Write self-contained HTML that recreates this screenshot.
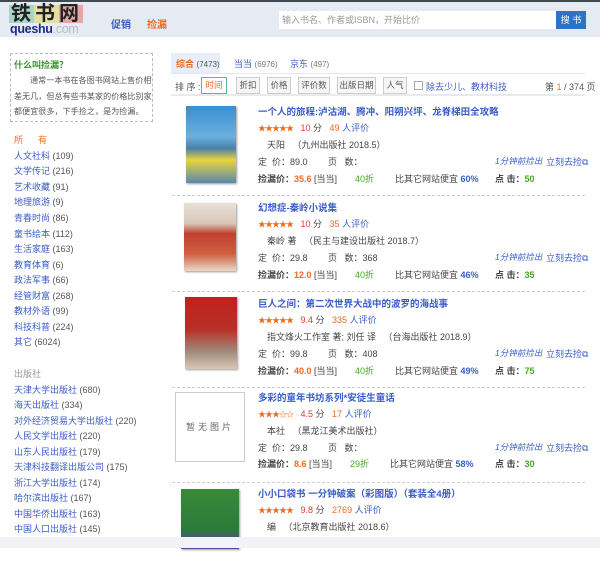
<!DOCTYPE html>
<html><head><meta charset="utf-8">
<style>
*{margin:0;padding:0;box-sizing:border-box}
body{width:600px;height:548px;overflow:hidden;background:#fff;font-family:"Liberation Sans","Noto Sans CJK SC",sans-serif;font-size:9px;color:#444;position:relative}
.a{position:absolute;white-space:nowrap}
.hdr{position:absolute;left:0;top:0;width:600px;height:37px;background:#e6ebf3;border-top:2px solid #3f4a50}
.blue{color:#3a5cc8}
.org{color:#f06a1e}
.red{color:#e8352a}
.grn{color:#46a52a}
.item{position:absolute;left:172px;width:413px;height:96px;border-bottom:1px dashed #ccc}
.item .t{left:86px;top:0;font-size:9.5px;font-weight:bold;color:#3a5cc8}
.stars{color:#f06a1e;font-size:8px;letter-spacing:-1px}
.cat{left:14px;font-size:9px}
.cat span{color:#555}
.btn{position:absolute;top:77px;height:17px;border:1px solid #ccc;background:#f6f6f6;font-size:8.5px;line-height:15px;text-align:center;color:#555;white-space:nowrap}
.m{font-style:italic;font-size:8.5px}
</style></head><body>
<div class="hdr"></div>
<div class="a" style="left:9px;top:5px;width:74px;height:18px;">
 <div class="a" style="left:0;top:0;width:25px;height:18px;background:#a8d5c8"></div>
 <div class="a" style="left:25px;top:0;width:25px;height:18px;background:#e3dfa0"></div>
 <div class="a" style="left:50px;top:0;width:24px;height:18px;background:#e6a6a6"></div>
 <div class="a" style="left:2px;top:-3px;font-size:20px;font-weight:bold;color:#222;letter-spacing:4px;line-height:24px">铁书网</div>
</div>
<div class="a" style="left:10px;top:22px;font-size:12.5px;font-weight:bold;color:#1d2a8a;letter-spacing:-0.3px">queshu<span style="color:#b7bcc6;font-weight:normal">.com</span></div>
<div class="a blue" style="left:111px;top:16px;font-size:10px;font-weight:bold">促销</div>
<div class="a org" style="left:147px;top:16px;font-size:10px;font-weight:bold">捡漏</div>
<div class="a" style="left:279px;top:11px;width:277px;height:18px;background:#fff;color:#999;font-size:9px;line-height:18px;padding-left:3px">输入书名、作者或ISBN，开始比价</div>
<div class="a" style="left:556px;top:11px;width:30px;height:18px;background:#2f73c7;color:#fff;font-size:9px;line-height:18px;text-align:center">搜 书</div>

<div class="a" style="left:10px;top:53px;width:143px;height:69px;border:1px dashed #bbb"></div>
<div class="a" style="left:14px;top:58px;font-weight:bold;color:#3a8f2a;font-size:9px">什么叫捡漏？</div>
<div class="a" style="left:14px;top:73px;line-height:15.5px;font-size:8px;color:#555;letter-spacing:0.1px">
<div style="padding-left:16px">通常一本书在各图书网站上售价相</div>
<div>差无几，但总有些书某家的价格比别家</div>
<div>都便宜很多，下手捡之，是为捡漏。</div>
</div>

<div class="a org" style="left:14px;top:133px">所&nbsp;&nbsp;&nbsp;&nbsp;&nbsp;&nbsp;有</div>
<div class="a cat blue" style="top:149px">人文社科 <span>(109)</span></div>
<div class="a cat blue" style="top:164px">文学传记 <span>(216)</span></div>
<div class="a cat blue" style="top:180px">艺术收藏 <span>(91)</span></div>
<div class="a cat blue" style="top:195px">地理旅游 <span>(9)</span></div>
<div class="a cat blue" style="top:211px">青春时尚 <span>(86)</span></div>
<div class="a cat blue" style="top:227px">童书绘本 <span>(112)</span></div>
<div class="a cat blue" style="top:242px">生活家庭 <span>(163)</span></div>
<div class="a cat blue" style="top:258px">教育体育 <span>(6)</span></div>
<div class="a cat blue" style="top:273px">政法军事 <span>(66)</span></div>
<div class="a cat blue" style="top:289px">经管财富 <span>(268)</span></div>
<div class="a cat blue" style="top:304px">教材外语 <span>(99)</span></div>
<div class="a cat blue" style="top:320px">科技科普 <span>(224)</span></div>
<div class="a cat blue" style="top:335px">其它 <span>(6024)</span></div>
<div class="a cat" style="top:367px;color:#999">出版社</div>
<div class="a cat blue" style="top:383px">天津大学出版社 <span>(680)</span></div>
<div class="a cat blue" style="top:398px">海天出版社 <span>(334)</span></div>
<div class="a cat blue" style="top:414px">对外经济贸易大学出版社 <span>(220)</span></div>
<div class="a cat blue" style="top:429px">人民文学出版社 <span>(220)</span></div>
<div class="a cat blue" style="top:445px">山东人民出版社 <span>(179)</span></div>
<div class="a cat blue" style="top:460px">天津科技翻译出版公司 <span>(175)</span></div>
<div class="a cat blue" style="top:476px">浙江大学出版社 <span>(174)</span></div>
<div class="a cat blue" style="top:491px">哈尔滨出版社 <span>(167)</span></div>
<div class="a cat blue" style="top:507px">中国华侨出版社 <span>(163)</span></div>
<div class="a cat blue" style="top:522px">中国人口出版社 <span>(145)</span></div>

<div class="a" style="left:171px;top:53px;width:49px;height:20px;background:#e7eef8"></div>
<div class="a" style="left:171px;top:73px;width:414px;height:1px;background:#e3e8f0"></div>
<div class="a" style="left:176px;top:57px"><b class="org">综合</b> <span style="color:#555;font-size:8px">(7473)</span></div>
<div class="a" style="left:234px;top:57px"><span class="blue">当当</span> <span style="color:#777;font-size:8px">(6976)</span></div>
<div class="a" style="left:290px;top:57px"><span class="blue">京东</span> <span style="color:#777;font-size:8px">(497)</span></div>
<div class="a" style="left:175px;top:80px;color:#555">排 序 :</div>
<div class="btn" style="left:201px;width:26px;border-color:#5bb89a;background:#fff;color:#f06a1e">时间</div>
<div class="btn" style="left:236px;width:24px">折扣</div>
<div class="btn" style="left:267px;width:24px">价格</div>
<div class="btn" style="left:298px;width:32px">评价数</div>
<div class="btn" style="left:337px;width:39px">出版日期</div>
<div class="btn" style="left:383px;width:24px">人气</div>
<div class="a" style="left:414px;top:81px;width:9px;height:9px;border:1px solid #aaa;background:#fff"></div>
<div class="a blue" style="left:426px;top:80px">除去少儿、教材科技</div>
<div class="a" style="left:545px;top:80px;color:#555">第 <span class="org">1</span> / 374 页</div>
<div class="a" style="left:171px;top:94px;width:414px;height:2px;background:#e6ebf3"></div>

<!-- item 1 -->
<div class="item" style="top:100px">
 <div class="a" style="left:14px;top:6px;width:50px;height:77px;background:linear-gradient(#3a8fd0 0%,#6bb0e0 40%,#4a7fa8 55%,#e8d43a 70%,#5a88b0 100%);box-shadow:1px 1px 2px #999"></div>
 <div class="a t" style="top:4px">一个人的旅程:泸沽湖、腾冲、阳朔兴坪、龙脊梯田全攻略</div>
 <div class="a" style="left:86px;top:21px"><span class="stars">★★★★★</span>&nbsp;&nbsp;&nbsp;<span class="red">10</span> 分 &nbsp; <span class="org">49</span> <span class="blue">人评价</span></div>
 <div class="a" style="left:95px;top:38px">天阳 &nbsp;&nbsp;（九州出版社 2018.5）</div>
 <div class="a" style="left:86px;top:55px">定 &nbsp;价：89.0</div>
 <div class="a" style="left:156px;top:55px">页 &nbsp;&nbsp;数：</div>
 <div class="a blue m" style="left:323px;top:55px">1分钟前捡出</div>
 <div class="a blue" style="left:374px;top:55px">立刻去捡⧉</div>
 <div class="a" style="left:86px;top:72px"><b>捡漏价：</b><b class="org">35.6</b> [当当]</div>
 <div class="a grn" style="left:183px;top:72px">40折</div>
 <div class="a" style="left:223px;top:72px">比其它网站便宜 <b class="blue">60%</b></div>
 <div class="a" style="left:323px;top:72px"><b>点 击：</b><b class="grn">50</b></div>
</div>
<!-- item 2 -->
<div class="item" style="top:196px">
 <div class="a" style="left:12px;top:7px;width:52px;height:68px;background:linear-gradient(#e8e0d8 0%,#d8c8b8 30%,#c04030 45%,#d06040 75%,#e8d8c8 100%);box-shadow:1px 1px 2px #999"></div>
 <div class="a t" style="top:4px">幻想症-秦岭小说集</div>
 <div class="a" style="left:86px;top:21px"><span class="stars">★★★★★</span>&nbsp;&nbsp;&nbsp;<span class="red">10</span> 分 &nbsp; <span class="org">35</span> <span class="blue">人评价</span></div>
 <div class="a" style="left:95px;top:38px">秦岭 著 &nbsp;&nbsp;（民主与建设出版社 2018.7）</div>
 <div class="a" style="left:86px;top:55px">定 &nbsp;价：29.8</div>
 <div class="a" style="left:156px;top:55px">页 &nbsp;&nbsp;数：368</div>
 <div class="a blue m" style="left:323px;top:55px">1分钟前捡出</div>
 <div class="a blue" style="left:374px;top:55px">立刻去捡⧉</div>
 <div class="a" style="left:86px;top:72px"><b>捡漏价：</b><b class="org">12.0</b> [当当]</div>
 <div class="a grn" style="left:183px;top:72px">40折</div>
 <div class="a" style="left:223px;top:72px">比其它网站便宜 <b class="blue">46%</b></div>
 <div class="a" style="left:323px;top:72px"><b>点 击：</b><b class="grn">35</b></div>
</div>
<!-- item 3 -->
<div class="item" style="top:292px">
 <div class="a" style="left:13px;top:5px;width:52px;height:72px;background:linear-gradient(#c02020 0%,#b83028 45%,#a08878 75%,#d8c8b8 100%);box-shadow:1px 1px 2px #999"></div>
 <div class="a t" style="top:4px">巨人之间：第二次世界大战中的波罗的海战事</div>
 <div class="a" style="left:86px;top:21px"><span class="stars">★★★★★</span>&nbsp;&nbsp;&nbsp;<span class="red">9.4</span> 分 &nbsp; <span class="org">335</span> <span class="blue">人评价</span></div>
 <div class="a" style="left:95px;top:38px">指文烽火工作室 著; 刘任 译 &nbsp;&nbsp;（台海出版社 2018.9）</div>
 <div class="a" style="left:86px;top:55px">定 &nbsp;价：99.8</div>
 <div class="a" style="left:156px;top:55px">页 &nbsp;&nbsp;数：408</div>
 <div class="a blue m" style="left:323px;top:55px">1分钟前捡出</div>
 <div class="a blue" style="left:374px;top:55px">立刻去捡⧉</div>
 <div class="a" style="left:86px;top:72px"><b>捡漏价：</b><b class="org">40.0</b> [当当]</div>
 <div class="a grn" style="left:183px;top:72px">40折</div>
 <div class="a" style="left:223px;top:72px">比其它网站便宜 <b class="blue">49%</b></div>
 <div class="a" style="left:323px;top:72px"><b>点 击：</b><b class="grn">75</b></div>
</div>
<!-- item 4 -->
<div class="item" style="top:387px">
 <div class="a" style="left:3px;top:5px;width:70px;height:70px;border:1px solid #ccc;text-align:center;line-height:68px;color:#666;letter-spacing:3px">暂无图片</div>
 <div class="a t" style="top:3px">多彩的童年书坊系列*安徒生童话</div>
 <div class="a" style="left:86px;top:20px"><span class="stars">★★★☆☆</span>&nbsp;&nbsp;&nbsp;<span class="red">4.5</span> 分 &nbsp; <span class="org">17</span> <span class="blue">人评价</span></div>
 <div class="a" style="left:95px;top:37px">本社 &nbsp;&nbsp;（黑龙江美术出版社）</div>
 <div class="a" style="left:86px;top:54px">定 &nbsp;价：29.8</div>
 <div class="a" style="left:156px;top:54px">页 &nbsp;&nbsp;数：</div>
 <div class="a blue m" style="left:323px;top:54px">1分钟前捡出</div>
 <div class="a blue" style="left:374px;top:54px">立刻去捡⧉</div>
 <div class="a" style="left:86px;top:70px"><b>捡漏价：</b><b class="org">8.6</b> [当当]</div>
 <div class="a grn" style="left:178px;top:70px">29折</div>
 <div class="a" style="left:218px;top:70px">比其它网站便宜 <b class="blue">58%</b></div>
 <div class="a" style="left:323px;top:70px"><b>点 击：</b><b class="grn">30</b></div>
</div>
<!-- item 5 -->
<div class="item" style="top:483px;border:none">
 <div class="a" style="left:9px;top:6px;width:58px;height:60px;background:linear-gradient(#3a8a3a 0%,#2a7a3a 70%,#5a4a9a 85%);box-shadow:1px 1px 2px #999"></div>
 <div class="a t" style="top:3px">小小口袋书 一分钟破案（彩图版）（套装全4册）</div>
 <div class="a" style="left:86px;top:20px"><span class="stars">★★★★★</span>&nbsp;&nbsp;&nbsp;<span class="red">9.8</span> 分 &nbsp; <span class="org">2769</span> <span class="blue">人评价</span></div>
 <div class="a" style="left:95px;top:37px">编 &nbsp;&nbsp;（北京教育出版社 2018.6）</div>
</div>
<div class="a" style="left:0;top:537px;width:600px;height:11px;background:#f1f3f6"></div>
</body></html>
